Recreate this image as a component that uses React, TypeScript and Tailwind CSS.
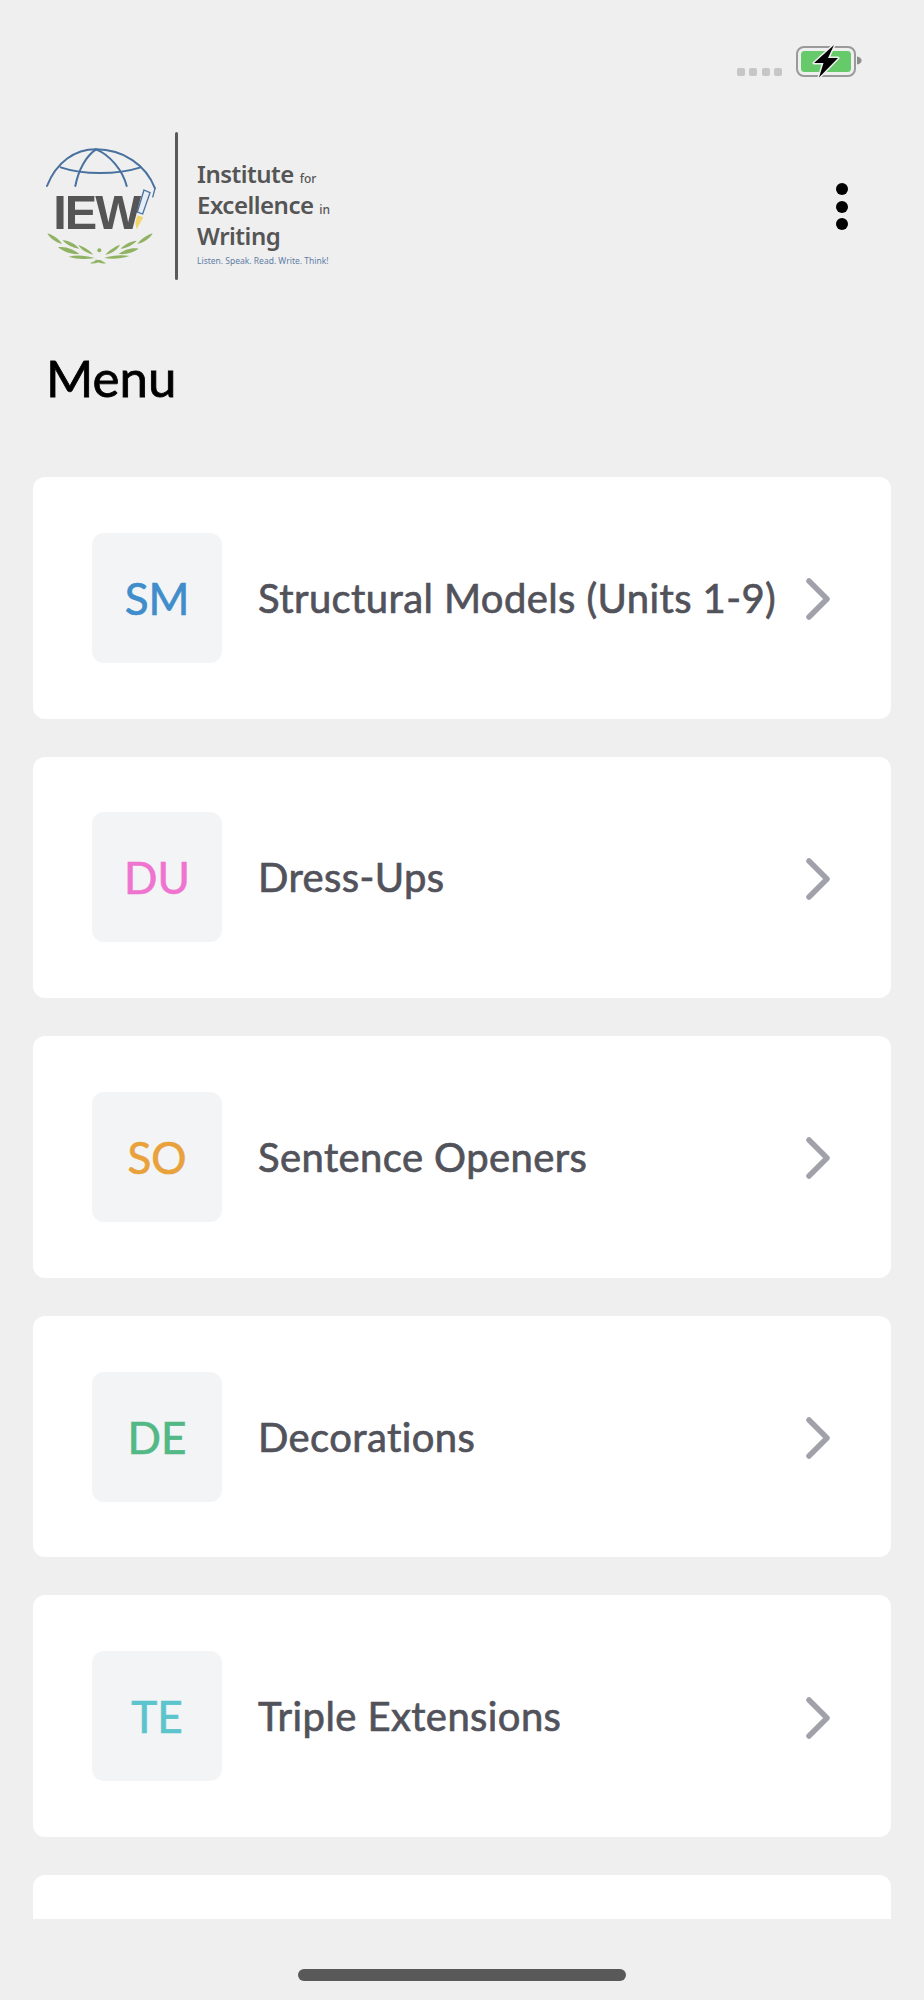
const items = [
  { code: 'SM', label: 'Structural Models (Units 1-9)', color: 'text-[#3f8dcb]' },
  { code: 'DU', label: 'Dress-Ups', color: 'text-[#ef74cf]' },
  { code: 'SO', label: 'Sentence Openers', color: 'text-[#e9a23b]' },
  { code: 'DE', label: 'Decorations', color: 'text-[#51b886]' },
  { code: 'TE', label: 'Triple Extensions', color: 'text-[#5cc4cc]' },
];

const StatusIcons = () => (
  <div className="flex items-end justify-end pr-[62px] pt-[44px] gap-[14px] h-[77px]">
    <div className="flex gap-[4.5px] mb-[1px]">
      <span className="w-2 h-2 rounded-[2px] bg-[#c6c6c6]" />
      <span className="w-2 h-2 rounded-[2px] bg-[#c6c6c6]" />
      <span className="w-2 h-2 rounded-[2px] bg-[#c6c6c6]" />
      <span className="w-2 h-2 rounded-[2px] bg-[#c6c6c6]" />
    </div>
    <svg width="66" height="34" viewBox="0 0 66 34" className="-mb-[1px]">
      <rect x="1" y="3" width="58" height="29" rx="7" fill="none" stroke="#9a9a9a" strokeWidth="2" />
      <rect x="5" y="7" width="50" height="21" rx="3.5" fill="#66c96a" />
      <path d="M61 12.5c3 .5 4.5 2 4.5 4s-1.500 3.500-4.500 4z" fill="#8e8e8e" />
      <path
        d="M38 1 L18 19 L27.500 19 L23 33.500 L42 14 L32 14 Z"
        fill="#000"
        stroke="#efefef"
        strokeWidth="3"
        strokeLinejoin="round"
        paintOrder="stroke"
      />
    </svg>
  </div>
);

const Logo = () => (
  <div className="flex items-stretch h-[148px]">
    <svg width="120" height="130" viewBox="60 90 360 390" className="mt-2">
      <g fill="none" stroke="#48719f" strokeWidth="6" strokeLinecap="round">
        <path d="M81 228C110 155 165 118 228 118C310 118 378 165 405 235" />
        <path d="M122 172C190 195 290 195 362 172" />
        <path d="M166 228C175 180 198 138 228 118" />
        <path d="M320 228C308 180 270 135 228 118" />
      </g>
      <path d="M405 235L398 262" fill="none" stroke="#48719f" strokeWidth="4" />
      <path d="M372 240L390 248L368 312L352 306Z" fill="#e7edf4" stroke="#48719f" strokeWidth="4" />
      <path d="M352 316L370 322L350 358L346 340Z" fill="#f0d66c" />
      <text
        x="100"
        y="356"
        fontFamily="'Liberation Sans', sans-serif"
        fontWeight="700"
        fontSize="146"
        letterSpacing="-6"
        fill="#555555"
      >
        IEW
      </text>
      <g fill="#8fb263">
        <path d="M82 370C100 375 118 388 126 402C108 398 90 386 82 370Z" />
        <path d="M128 390C148 392 168 404 178 416C158 414 138 404 128 390Z" />
        <path d="M114 412C136 408 160 418 178 432C154 434 132 426 114 412Z" />
        <path d="M175 405C192 410 210 422 220 434C202 430 184 420 175 405Z" />
        <path d="M146 440C170 434 196 436 224 444C198 448 170 448 146 440Z" />
        <path d="M210 460C222 452 236 450 246 450C238 458 224 462 210 460Z" />
        <path d="M258 460C246 452 234 448 224 450C232 458 246 462 258 460Z" />
        <path d="M398 370C380 375 362 388 352 402C372 398 390 386 398 370Z" />
        <path d="M350 392C330 394 312 404 302 416C322 414 340 404 350 392Z" />
        <path d="M356 416C334 412 312 420 296 432C318 434 340 428 356 416Z" />
        <path d="M300 404C284 410 266 422 256 434C274 430 292 420 300 404Z" />
        <path d="M328 438C304 434 278 436 252 444C278 448 304 446 328 438Z" />
        <circle cx="238" cy="421" r="6" />
      </g>
    </svg>
    <div className="w-[3px] bg-[#5a5a5a] ml-[15px] rounded-full" />
    <div className="ml-[19px] pt-[26px] font-['Noto_Sans',sans-serif] text-[#555555] font-semibold text-[24px] leading-[31px] tracking-[-0.5px]">
      <p>
        Institute <span className="text-[12px] leading-none font-medium tracking-normal">for</span>
      </p>
      <p>
        Excellence <span className="text-[12px] leading-none font-medium tracking-normal">in</span>
      </p>
      <p>Writing</p>
      <p className="text-[#5f7da6] font-normal text-[8.500px] leading-[12px] tracking-normal mt-[4px]">
        Listen. Speak. Read. Write. Think!
      </p>
    </div>
  </div>
);

const MenuCard = ({ code, label, color }: { code: string; label: string; color: string }) => (
  <div className="shrink-0 h-[241.6px] bg-white rounded-xl flex items-center pl-[59px] pr-[60px]">
    <div className="w-[130px] h-[130px] bg-gray-100 rounded-xl flex items-center justify-center">
      <span className={`text-[44px] [-webkit-text-stroke:0.7px] ${color}`}>{code}</span>
    </div>
    <span className="ml-[36px] flex-1 text-[40px] tracking-[0.4px] [-webkit-text-stroke:0.7px] text-[#52525b] whitespace-nowrap">
      {label}
    </span>
    <svg width="26" height="42" viewBox="0 0 26 42" fill="none" className="mt-[3px]">
      <path d="M4 3L22 21L4 39" stroke="#a1a1aa" strokeWidth="5.500" strokeLinecap="round" strokeLinejoin="round" />
    </svg>
  </div>
);

export default function App() {
  return (
    <div className="w-[924px] h-[2000px] overflow-hidden bg-[#efefef] font-['Lato',sans-serif]">
      <StatusIcons />
      <div className="mt-[55px] flex justify-between pl-[40px] pr-[76px]">
        <Logo />
        <div className="flex flex-col items-center gap-[5.500px] pt-[51px]">
          <span className="w-3 h-3 rounded-full bg-black" />
          <span className="w-3 h-3 rounded-full bg-black" />
          <span className="w-3 h-3 rounded-full bg-black" />
        </div>
      </div>
      <h1 className="mt-[70px] ml-[46px] text-[51px] leading-[56px] [-webkit-text-stroke:0.8px] text-black">Menu</h1>
      <div className="mt-[71px] h-[1442px] overflow-hidden flex flex-col gap-[38px] px-[33px]">
        {items.map((item) => (
          <MenuCard key={item.code} {...item} />
        ))}
        <div className="shrink-0 h-[241.6px] bg-white rounded-xl" />
      </div>
      <div className="mt-[50px] mx-auto w-[328px] h-3 rounded-md bg-[#595959]" />
    </div>
  );
}
